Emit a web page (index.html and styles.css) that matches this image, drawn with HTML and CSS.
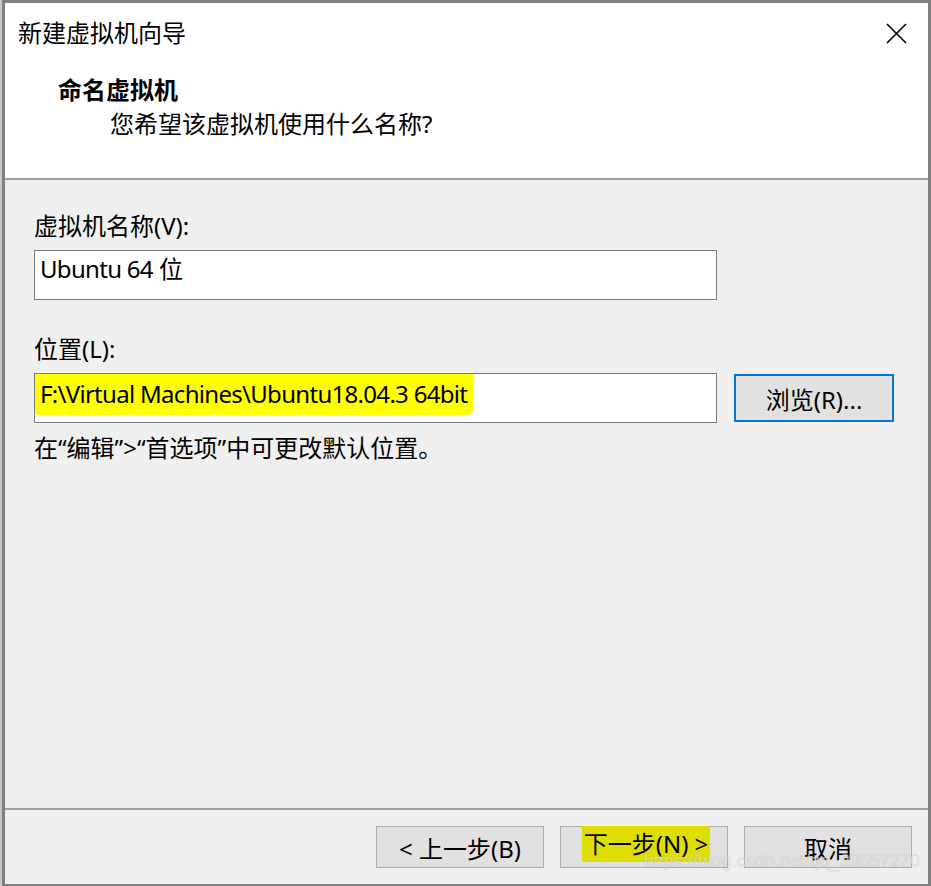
FILE: index.html
```html
<!DOCTYPE html>
<html lang="zh-CN">

<head>
    <meta charset="UTF-8">
    <title>新建虚拟机向导</title>
    <link rel="stylesheet" href="styles.css">
</head>

<body>
    <div class="window">
        <div class="header">
            <div class="titleBar">
                <span class="title">新建虚拟机向导</span>
                <span class="close">
                    <svg width="21" height="21" viewBox="0 0 21 21">
                        <path d="M1 1 L20 20 M20 1 L1 20" stroke="#000" stroke-width="1.6" fill="none" />
                    </svg>
                </span>
            </div>
            <div class="stepTitle">命名虚拟机</div>
            <div class="stepDesc">您希望该虚拟机使用什么名称?</div>
        </div>

        <div class="content">
            <div class="label">虚拟机名称(V):</div>
            <div class="row">
                <div class="input"><span class="latin">Ubuntu 64</span> 位</div>
            </div>

            <div class="label second">位置(L):</div>
            <div class="row">
                <div class="input"><span class="mark latin">F:\Virtual Machines\Ubuntu18.04.3 64bit</span></div>
                <div class="btn browse">浏览(R)...</div>
            </div>

            <div class="hint">在“编辑”&gt;“首选项”中可更改默认位置。</div>
        </div>

        <div class="footer">
            <div class="btn">&lt; 上一步(B)</div>
            <div class="btn"><span class="markBtn">下一步(N) &gt;</span></div>
            <div class="btn">取消</div>
            <div class="watermark">https://blog.csdn.net/qq_39557270</div>
        </div>
    </div>
</body>

</html>
```

FILE: styles.css
```css
* {
    margin: 0px;
    padding: 0px;
    box-sizing: border-box;
}

html,
body {
    width: 100%;
    height: 100%;
}

body {
    background-color: #c8c8c8;
    font-family: "Noto Sans", "Noto Sans CJK SC", sans-serif;
    font-size: 24px;
    color: #000;
}

.window {
    position: relative;
    display: flex;
    flex-direction: column;
    width: 929px;
    height: 886px;
    margin-left: 2px;
    border: 3px solid #808080;
    border-bottom-width: 2px;
    background-color: #f0f0f0;
}

.header {
    height: 177px;
    background-color: #fff;
    border-bottom: 2px solid #a0a0a0;
}

.titleBar {
    display: flex;
    align-items: center;
    justify-content: space-between;
    height: 56px;
    padding-left: 13px;
    padding-right: 21px;
}

.close {
    display: flex;
    margin-top: 4px;
}

.stepTitle {
    margin-top: 15px;
    padding-left: 53px;
    font-weight: bold;
    line-height: 32px;
}

.stepDesc {
    padding-left: 105px;
    line-height: 36px;
}

.latin {
    letter-spacing: -0.7px;
}

.content {
    flex: 1;
    padding: 30px 0 0 29px;
    border-bottom: 2px solid #a0a0a0;
}

.label {
    line-height: 32px;
    margin-bottom: 8px;
}

.label.second {
    margin-top: 33px;
    margin-bottom: 8px;
}

.row {
    display: flex;
    align-items: center;
}

.input {
    width: 683px;
    height: 50px;
    padding: 0 0 0 5px;
    border: 1px solid #7a7a7a;
    background-color: #fff;
    line-height: 36px;
}

.mark {
    display: inline-block;
    margin-left: -5px;
    padding: 1px 7px 2px 5px;
    background-color: #ffff00;
    border-radius: 0 2px 8px 4px;
    line-height: 38px;
}

.btn {
    display: flex;
    align-items: center;
    justify-content: center;
    width: 168px;
    height: 42px;
    border: 1px solid #adadad;
    background-color: #e1e1e1;
}

.browse {
    width: 160px;
    height: 48px;
    margin-left: 17px;
    border: 2px solid #0078d7;
}

.hint {
    margin-top: 9px;
    line-height: 32px;
}

.footer {
    display: flex;
    justify-content: flex-end;
    gap: 16px;
    height: 74px;
    padding: 16px 16px 0 0;
}

.markBtn {
    display: inline-block;
    margin-left: 4px;
    padding: 0 2px;
    background-color: #dede00;
    line-height: 36px;
    margin-top: -6px;
}

.watermark {
    position: absolute;
    right: 8px;
    bottom: 12px;
    font-family: "Liberation Sans", sans-serif;
    font-size: 18px;
    color: rgba(255, 255, 255, 0.6);
    text-shadow: 0 0 1px rgba(0, 0, 0, 0.25);
}
```
